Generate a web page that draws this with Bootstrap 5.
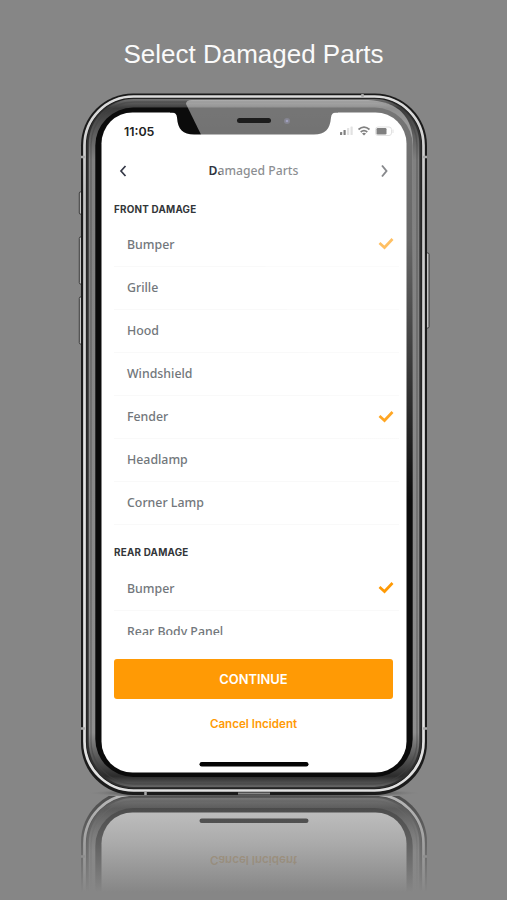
<!DOCTYPE html>
<html lang="en">
<head>
<meta charset="utf-8">
<meta name="viewport" content="width=device-width, initial-scale=1">
<title>Select Damaged Parts</title>
<link href="https://cdn.jsdelivr.net/npm/bootstrap@5.3.0/dist/css/bootstrap.min.css" rel="stylesheet">
<style>
body{background:#868686;width:507px;height:900px;overflow:hidden;font-family:"Noto Sans",sans-serif}
.page-title{height:93px;padding-top:38px;font:400 26px/32px "Liberation Sans",sans-serif;color:#fafafa;text-align:center;white-space:nowrap}
.phone{width:347px;height:702px;margin-left:81px}
.art{left:-81px;top:-93px;pointer-events:none}
.display-area{margin:0 20px;padding-top:19px;width:305px;height:680px}
.status{height:39px;padding:9px 12px 0 23px;font:600 12.4px/22px Inter,sans-serif;color:#222}
.status svg{margin-top:-1px}
.topbar{height:40px;padding:0 18px 0 18px}
.topbar h1{font:500 12.2px/16px "Noto Sans",sans-serif;color:#3b3f46;margin:0}
.topbar h1 b{font-weight:600;color:#30333e}
.parts-scroll{height:444px;overflow:hidden;padding:12px 7px 0 13px}
.sec{font:700 9.85px/12px Inter,sans-serif;color:#333639;letter-spacing:.22px;margin:0}
.sec-front{height:20.500px}
.sec-rear{height:42.300px;padding-top:21px}
.part{height:43.15px;padding:0 6px 0 13px;font:500 12.35px/16px "Noto Sans",sans-serif;color:#72777b;border-bottom:1px solid #f9f9f9}
.part svg{margin-right:-1px;margin-top:-2px}
.go{margin:24px 13px 0;width:279px;height:40px;background:#ff9a05;color:#fff;border:0;border-radius:3px;font:600 12.9px/41px Inter,sans-serif;padding:0}
.go:hover{background:#f59200;color:#fff}
.quit{display:block;margin-top:16px;font:600 11.600px/18px Inter,sans-serif;color:#ff9a05;text-decoration:none;text-align:center}
</style>
<script src="https://cdn.jsdelivr.net/npm/bootstrap@5.3.0/dist/js/bootstrap.bundle.min.js"></script>
</head>
<body>
<div class="page-title">Select Damaged Parts</div>
<main class="phone position-relative">
<svg class="art position-absolute" width="507" height="900" viewBox="0 0 507 900" aria-hidden="true">
<defs>
<linearGradient id="fade" x1="0" y1="795" x2="0" y2="892" gradientUnits="userSpaceOnUse"><stop offset="0" stop-color="#868686" stop-opacity=".46"/><stop offset=".5" stop-color="#868686" stop-opacity=".7"/><stop offset="1" stop-color="#868686"/></linearGradient>
<linearGradient id="rim" x1="0" y1="94" x2="0" y2="795" gradientUnits="userSpaceOnUse"><stop offset="0" stop-color="#ddd"/><stop offset=".15" stop-color="#c4c4c4"/><stop offset=".5" stop-color="#e4e4e4"/><stop offset="1" stop-color="#e0e0e0"/></linearGradient>
<linearGradient id="band" x1="0" y1="98" x2="0" y2="788" gradientUnits="userSpaceOnUse"><stop offset="0" stop-color="#777"/><stop offset=".015" stop-color="#3a3a3a"/><stop offset=".09" stop-color="#808080"/><stop offset=".92" stop-color="#8e8e8e"/><stop offset=".983" stop-color="#2c2c2c"/><stop offset="1" stop-color="#6c6c6c"/></linearGradient>
<radialGradient id="cast"><stop offset="0" stop-color="#222" stop-opacity=".7"/><stop offset=".8" stop-color="#444" stop-opacity=".5"/><stop offset="1" stop-color="#777" stop-opacity="0"/></radialGradient>
<clipPath id="below"><rect y="796" width="507" height="104"/></clipPath>
<g id="shell">
<rect x="81" y="93.500" width="346" height="701.500" rx="52" fill="#1b1b1b"/>
<rect x="84.500" y="96.500" width="339" height="694" rx="49" fill="none" stroke="url(#rim)" stroke-width="2.700"/>
<rect x="86.500" y="98.500" width="335" height="690" rx="47" fill="#303030"/>
<rect x="88.700" y="99" width="330.600" height="688" rx="45" fill="url(#band)"/>
<rect x="91" y="102" width="326" height="682" rx="43" fill="none" stroke="#444" stroke-opacity=".5" stroke-width="1.300"/>
<rect x="95.300" y="107.500" width="317.400" height="669.500" rx="38" fill="#0b0b0b"/>
<rect x="101.500" y="112.500" width="305" height="660" rx="31" fill="#fff"/>
<path d="M81 157h4M423 157h4M81 728.500h4M423 728.500h4M145.500 791v4M362.500 94v4" stroke="#aaa" stroke-width="2.500"/>
<path d="M238 793.500h32" stroke="#888" stroke-width="2"/>
<rect x="199.500" y="762" width="109" height="4.500" rx="2.200" fill="#050505"/>
</g>
</defs>
<ellipse cx="254" cy="793" rx="166" ry="5" fill="url(#cast)"/>
<g clip-path="url(#below)"><use href="#shell" transform="translate(0 1585) scale(1 -1)"/>
<text x="253.500" y="-856" transform="scale(1 -1)" text-anchor="middle" font-family="Inter,sans-serif" font-size="11.600" font-weight="600" fill="#e09a30" fill-opacity=".8">Cancel Incident</text>
<rect x="78" y="795" width="353" height="105" fill="url(#fade)"/></g>
<g fill="#c2c2c2" stroke="#222" stroke-width=".8"><rect x="79.300" y="192" width="2.600" height="22" rx="1"/><rect x="79.300" y="237" width="3" height="47" rx="1.300"/><rect x="79.300" y="297" width="3" height="47" rx="1.300"/><rect x="425.500" y="253" width="3.500" height="75" rx="1.300"/></g>
<use href="#shell"/>
<path d="M170 110v2.500h2q4.500 0 5 5c.8 12 6 17 17 17h120c11 0 16-5 17-17q.5-5 5-5h2V110z" fill="#0b0b0b"/>
</svg>
<section class="display-area position-relative d-flex flex-column">
<div class="status d-flex justify-content-between"><span>11:05</span>
<svg width="56" height="22" viewBox="0 0 56 22" aria-hidden="true"><g fill="#222"><rect x="2" y="12" width="2.200" height="3" rx=".6"/><rect x="5.500" y="10" width="2.200" height="5" rx=".6"/></g><g fill="#ccc"><rect x="9" y="8" width="2.200" height="7" rx=".6"/><rect x="12.500" y="6.500" width="2.200" height="8.500" rx=".6"/></g>
<g fill="none" stroke="#222" stroke-width="1.700"><path d="M20.500 9.500q5.500-4.600 11 0M22.700 12q3.300-2.800 6.600 0"/></g><path d="M24 13.500q2-1.500 4 0l-2 2z" fill="#222"/>
<rect x="37.500" y="7" width="16" height="8.500" rx="2.500" fill="none" stroke="#ccc"/><rect x="38.500" y="8" width="10" height="6.500" rx="1.200" fill="#222"/><path d="M55 9.500v3.500" stroke="#ccc"/></svg></div>
<header class="topbar d-flex align-items-center justify-content-between">
<svg width="8" height="14" viewBox="0 0 8 14"><path d="M6.500 2 2 7l4.500 5" fill="none" stroke="#343746" stroke-width="1.700"/></svg>
<h1><b>D</b>amaged Parts</h1>
<svg width="8" height="14" viewBox="0 0 8 14"><path d="m2 1.500 4.500 5.500L2 12.500" fill="none" stroke="#33363c" stroke-width="1.900"/></svg>
</header>
<div class="parts-scroll">
<h2 class="sec sec-front">FRONT DAMAGE</h2>
<div class="part d-flex align-items-center justify-content-between">Bumper<svg width="16" height="13" viewBox="0 0 16 13"><path d="m1.500 6 5 4.500L14.500 2" fill="none" stroke="#ff9a05" stroke-width="2.700"/></svg></div>
<div class="part d-flex align-items-center">Grille</div>
<div class="part d-flex align-items-center">Hood</div>
<div class="part d-flex align-items-center">Windshield</div>
<div class="part d-flex align-items-center justify-content-between">Fender<svg width="16" height="13" viewBox="0 0 16 13"><path d="m1.500 6 5 4.500L14.500 2" fill="none" stroke="#ff9a05" stroke-width="2.700"/></svg></div>
<div class="part d-flex align-items-center">Headlamp</div>
<div class="part d-flex align-items-center">Corner Lamp</div>
<h2 class="sec sec-rear">REAR DAMAGE</h2>
<div class="part d-flex align-items-center justify-content-between">Bumper<svg width="16" height="13" viewBox="0 0 16 13"><path d="m1.500 6 5 4.500L14.500 2" fill="none" stroke="#ff9a05" stroke-width="2.700"/></svg></div>
<div class="part d-flex align-items-center">Rear Body Panel</div>
</div>
<button class="btn go">CONTINUE</button>
<a class="quit" href="#">Cancel Incident</a>
</section>
<svg class="art position-absolute" width="507" height="900" viewBox="0 0 507 900" aria-hidden="true">
<defs><linearGradient id="glare" x1="0" y1="100" x2="0" y2="500" gradientUnits="userSpaceOnUse"><stop offset="0" stop-color="#fff" stop-opacity=".44"/><stop offset=".35" stop-color="#fff" stop-opacity=".38"/><stop offset="1" stop-color="#fff" stop-opacity="0"/></linearGradient></defs>
<path d="M186 104q0-4 6-4h176q45 2 45 45v420L265 265z" fill="url(#glare)"/>
<rect x="237" y="118" width="34" height="5" rx="2.500" fill="#1c1c1c"/><circle cx="287" cy="121" r="3" fill="#858591"/><circle cx="287" cy="121" r="1.300" fill="#a0a0bd"/>
</svg>
</main>
</body>
</html>
